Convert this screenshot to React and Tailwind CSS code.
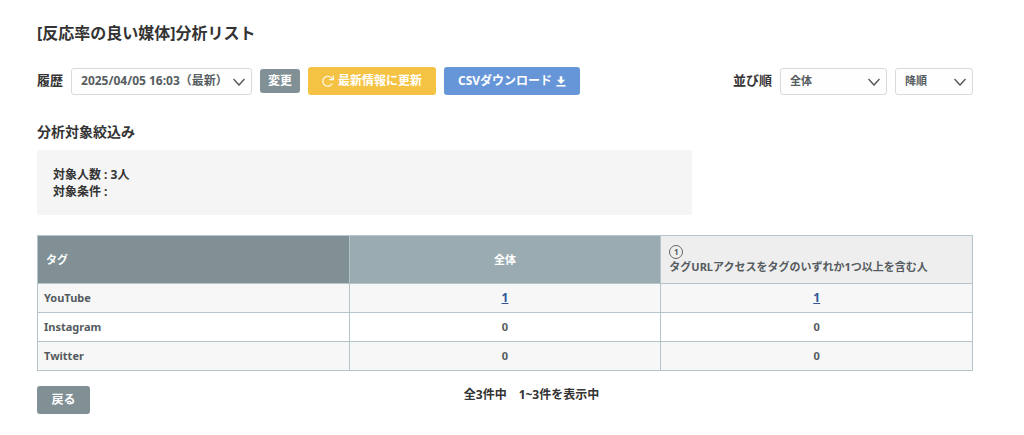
import { useState } from 'react'

const ROWS = [
  { tag: 'YouTube', total: 1, matched: 1 },
  { tag: 'Instagram', total: 0, matched: 0 },
  { tag: 'Twitter', total: 0, matched: 0 },
]

function Select({ id, label, value, onChange, options, className }) {
  return (
    <div className={`relative ${className}`}>
      <select
        id={id}
        aria-label={label}
        value={value}
        onChange={(e) => onChange(e.target.value)}
        className="block w-full h-[27px] appearance-none rounded-[3px] border border-[#d8dadb] bg-[#fefefe] pl-[9px] pr-5 font-bold text-[#565d60]"
      >
        {options.map((o) => (
          <option key={o} value={o}>{o}</option>
        ))}
      </select>
      <svg
        viewBox="0 0 12 8"
        className="pointer-events-none absolute right-[7px] top-[10px] h-2 w-3"
        fill="none"
        stroke="#5b5b5b"
        strokeWidth="1.5"
      >
        <path d="M0.5 1 L6 7 L11.5 1" />
      </svg>
    </div>
  )
}

function RefreshIcon() {
  return (
    <svg viewBox="0 0 12 12" className="h-3 w-3" fill="none" stroke="currentColor" strokeWidth="1.1">
      <path d="M10.2 8.6 A5 5 0 1 1 9.4 2.8 L11 4.4" />
      <path d="M11.3 0.4 V4.6 H7.2" />
    </svg>
  )
}

function DownloadIcon() {
  return (
    <svg viewBox="0 0 10 11" className="h-[11px] w-[10px]" fill="currentColor">
      <path d="M3.7 0.3 H6.3 V3.8 H9.2 L5 8 L0.8 3.8 H3.7 Z" />
      <path d="M0.4 9 H9.6 V10.6 H0.4 Z" />
    </svg>
  )
}

function Count({ value }) {
  if (!value) return value
  return <a href="#detail" className="text-[12px] text-[#2f5597] underline">{value}</a>
}

export default function App() {
  const [history, setHistory] = useState('2025/04/05 16:03（最新）')
  const [target, setTarget] = useState('全体')
  const [order, setOrder] = useState('降順')

  return (
    <main className="bg-white pt-[22px] pl-[37px] pr-[51px] pb-5 font-['Noto_Sans','Noto_Sans_CJK_JP',sans-serif] font-bold text-[#333]">
      <h1 className="text-[16px] leading-[22px]">[反応率の良い媒体]分析リスト</h1>

      {/* Toolbar */}
      <div className="mt-[23px] flex items-center justify-between">
        <div className="flex items-center gap-2">
          <label htmlFor="history" className="text-[13px]">履歴</label>
          <Select
            id="history"
            value={history}
            onChange={setHistory}
            options={['2025/04/05 16:03（最新）']}
            className="w-[181px] text-[12px]"
          />
          <button className="h-6 rounded-[3px] bg-[#809095] px-2 text-[12px] text-white">変更</button>
          <button className="flex h-7 w-32 items-center justify-center gap-1 rounded-[3px] bg-[#f5c344] text-[12px] text-white">
            <RefreshIcon />
            最新情報に更新
          </button>
          <button className="flex h-7 w-[136px] items-center justify-center gap-1 rounded-[3px] bg-[#6696d8] text-[12px] text-white">
            CSVダウンロード
            <DownloadIcon />
          </button>
        </div>
        <div className="flex items-center gap-2">
          <label htmlFor="target" className="text-[13px]">並び順</label>
          <Select id="target" value={target} onChange={setTarget} options={['全体']} className="w-[107px] text-[11px]" />
          <Select
            id="order"
            label="昇順・降順"
            value={order}
            onChange={setOrder}
            options={['降順', '昇順']}
            className="w-[78px] text-[11px]"
          />
        </div>
      </div>

      {/* Filter summary */}
      <h2 className="mt-[27px] text-[14px] leading-5">分析対象絞込み</h2>
      <div className="mt-2 w-[70%] rounded-[3px] bg-[#f5f5f5] px-4 pt-4 pb-[15px] text-[12px] leading-[17px]">
        <p>対象人数 : 3人</p>
        <p>対象条件 :</p>
      </div>

      <table className="mt-5 w-full table-fixed border-collapse border border-[#b5c4c8] text-[11px] leading-4 text-[#555b5e]">
        <thead>
          <tr className="h-12">
            <th className="border border-[#b5c4c8] bg-[#809095] px-2 text-left text-white">タグ</th>
            <th className="border border-[#b5c4c8] bg-[#9aabb1] px-2 text-center text-white">全体</th>
            <th className="border border-[#b5c4c8] bg-[#eee] px-2 text-left">
              <span className="flex h-[14px] w-[14px] items-center justify-center rounded-full border border-[#666] text-[8px] leading-none">1</span>
              タグURLアクセスをタグのいずれか1つ以上を含む人
            </th>
          </tr>
        </thead>
        <tbody>
          {ROWS.map((row) => (
            <tr key={row.tag} className="h-[29px] odd:bg-[#f7f7f7]">
              <td className="border border-[#b5c4c8] px-1.5">{row.tag}</td>
              <td className="border border-[#b5c4c8] text-center"><Count value={row.total} /></td>
              <td className="border border-[#b5c4c8] text-center"><Count value={row.matched} /></td>
            </tr>
          ))}
        </tbody>
      </table>

      <div className="mt-[15px] flex items-start">
        <button className="h-7 w-[53px] rounded-[3px] bg-[#809095] text-[12px] text-white">戻る</button>
        <p className="flex-1 text-center text-[12px] leading-[17px]">全3件中　1~3件を表示中</p>
      </div>
    </main>
  )
}
